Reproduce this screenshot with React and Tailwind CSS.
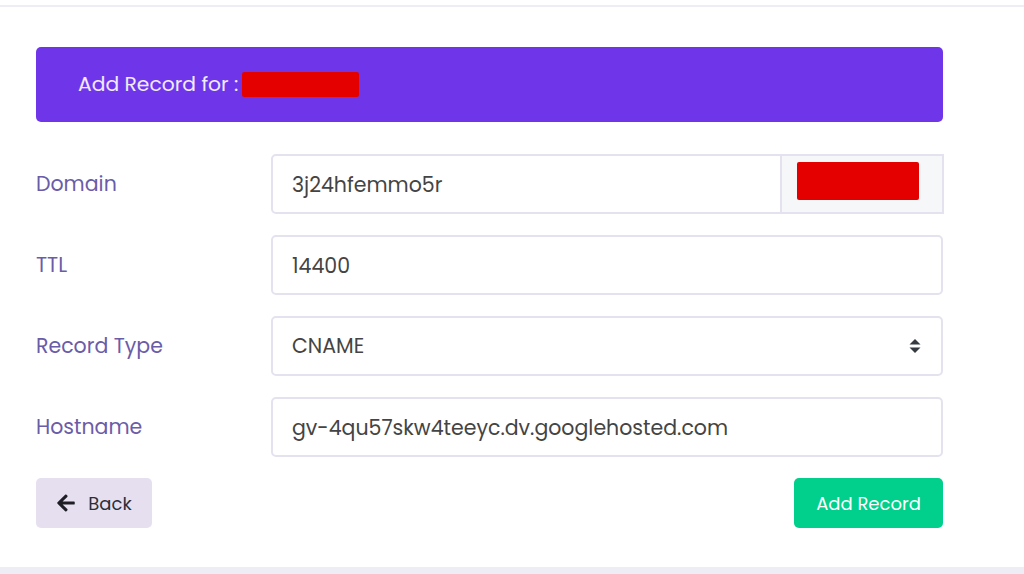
import React, { useState } from 'react';
import { FaArrowLeft } from 'react-icons/fa';

const font = { fontFamily: 'Poppins, "Open Sans", "Liberation Sans", sans-serif' };

function Field({ label, children }) {
  return (
    <div className="flex items-center">
      <label className="w-[235px] shrink-0 text-[20.5px] text-[#6b5ca8]">{label}</label>
      <div className="flex-1">{children}</div>
    </div>
  );
}

function App() {
  const [form, setForm] = useState({
    domain: '3j24hfemmo5r',
    ttl: '14400',
    type: 'CNAME',
    hostname: 'gv-4qu57skw4teeyc.dv.googlehosted.com'
  });

  const inputCls =
    'w-full h-[60px] px-[19px] border-2 border-[#e4e2ef] rounded-[5px] bg-white text-[20.5px] text-[#444] outline-none';

  return (
    <div className="min-h-[574px] bg-white flex flex-col" style={font}>
      <div className="pt-[5px]">
        <div className="h-[2px] bg-[#eeedf5]"></div>
      </div>

      <div className="w-[907px] ml-[36px] pt-[40px] pb-[39px]">
        <div className="h-[75px] rounded-[5px] bg-[#6f35e8] flex items-center pl-[42px]">
          <span className="text-[20.3px] text-white/90">Add Record for :</span>
          <span className="ml-[4px] w-[117px] h-[25px] rounded-[2px] bg-[#e50000]"></span>
        </div>

        <div className="mt-[32px] flex flex-col gap-[21px]">
          <Field label="Domain">
            <div className="flex h-[60px] mr-[-1px]">
              <input
                className="flex-1 min-w-0 h-full px-[19px] border-2 border-[#e4e2ef] rounded-l-[5px] text-[20.5px] text-[#444] outline-none"
                value={form.domain}
                onChange={(e) => setForm({ ...form, domain: e.target.value })}
              />
              <div className="w-[162px] h-full border-2 border-l-0 border-[#e4e2ef] bg-[#f6f7f9] flex items-start pt-[6px] pl-[15px]">
                <span className="w-[122px] h-[38px] rounded-[2px] bg-[#e50000]"></span>
              </div>
            </div>
          </Field>

          <Field label="TTL">
            <input
              className={inputCls}
              value={form.ttl}
              onChange={(e) => setForm({ ...form, ttl: e.target.value })}
            />
          </Field>

          <Field label="Record Type">
            <div className="relative">
              <select
                className={`${inputCls} appearance-none`}
                value={form.type}
                onChange={(e) => setForm({ ...form, type: e.target.value })}
              >
                <option>A</option>
                <option>AAAA</option>
                <option>CNAME</option>
                <option>MX</option>
                <option>TXT</option>
              </select>
              <svg
                className="absolute right-[22px] top-1/2 -translate-y-1/2 pointer-events-none"
                width="12"
                height="16"
                viewBox="0 0 12 16"
              >
                <path d="M6 1 L11.5 6.5 H0.5 Z" fill="#343a40" />
                <path d="M6 15 L11.5 9.5 H0.5 Z" fill="#343a40" />
              </svg>
            </div>
          </Field>

          <Field label="Hostname">
            <input
              className={inputCls}
              value={form.hostname}
              onChange={(e) => setForm({ ...form, hostname: e.target.value })}
            />
          </Field>
        </div>

        <div className="mt-[21px] flex justify-between">
          <button className="h-[50px] w-[116px] rounded-[5px] bg-[#e5dff0] flex items-center justify-center gap-[12px] text-[18px] text-[#2d2d3a]">
            <FaArrowLeft className="w-[20px] h-[20px] text-[#1e1e24]" />
            Back
          </button>
          <button className="h-[50px] w-[149px] rounded-[5px] bg-[#00d08b] text-[18px] text-white">
            Add Record
          </button>
        </div>
      </div>

      <div className="flex-1 bg-[#eeedf5]"></div>
    </div>
  );
}

export default App;
